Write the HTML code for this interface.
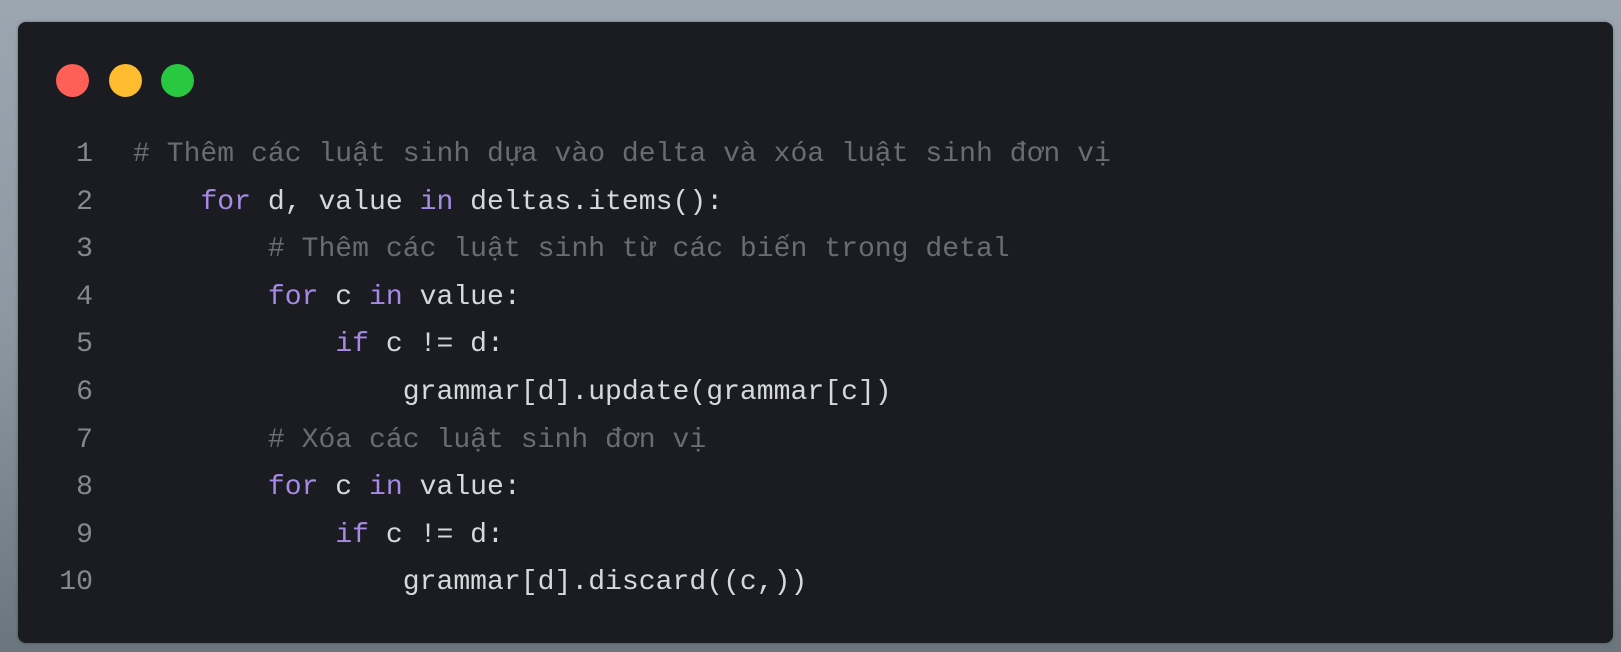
<!DOCTYPE html>
<html><head><meta charset="utf-8"><style>
html,body{margin:0;padding:0;}
body{width:1621px;height:652px;overflow:hidden;background:linear-gradient(180deg,#9ba6b1 0%,#8c97a2 50%,#6a757e 100%);position:relative;}
.panel{position:absolute;left:18px;top:22px;width:1595px;height:621px;background:#1b1c21;border-radius:8px;box-shadow:0 0 3px rgba(0,0,0,.3);}
.dot{position:absolute;top:42px;width:33px;height:33px;border-radius:50%;}
.code{position:absolute;left:0;top:131px;font-family:"Liberation Mono",monospace;font-size:28.1px;line-height:47.6px;white-space:pre;color:#d6d8db;}
.ln{position:absolute;left:30px;width:63px;text-align:right;color:#85888e;font-family:"Liberation Mono",monospace;font-size:28.1px;line-height:47.6px;top:131px;white-space:pre;}
.src{position:absolute;left:133px;}
.c{color:#686c73}.k{color:#a68ae6}
</style></head><body>
<div class="panel">
<div class="dot" style="left:38px;background:#fe5f57"></div>
<div class="dot" style="left:91px;background:#febc2e"></div>
<div class="dot" style="left:143px;background:#28c840"></div>
</div>
<div class="ln">1
2
3
4
5
6
7
8
9
10</div>
<div class="code"><div class="src"><span class="c"># Thêm các luật sinh dựa vào delta và xóa luật sinh đơn vị</span>
    <span class="k">for</span> d, value <span class="k">in</span> deltas.items():
        <span class="c"># Thêm các luật sinh từ các biến trong detal</span>
        <span class="k">for</span> c <span class="k">in</span> value:
            <span class="k">if</span> c != d:
                grammar[d].update(grammar[c])
        <span class="c"># Xóa các luật sinh đơn vị</span>
        <span class="k">for</span> c <span class="k">in</span> value:
            <span class="k">if</span> c != d:
                grammar[d].discard((c,))</div></div>
</body></html>
